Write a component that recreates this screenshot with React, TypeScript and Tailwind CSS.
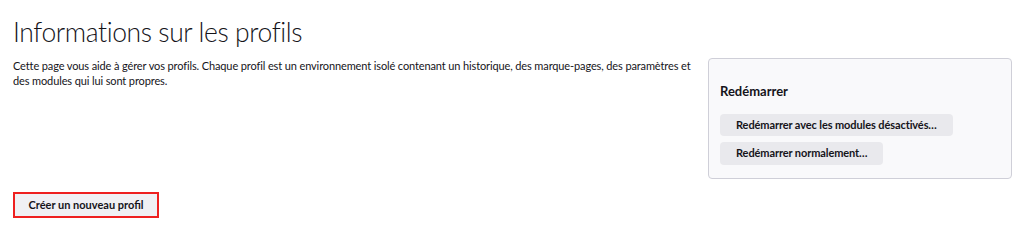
import React from "react";

export default function App() {
  return (
    <div className="w-[1024px] h-[229px] bg-white text-[#15141a] overflow-hidden" style={{ fontFamily: 'Lato, "Noto Sans", sans-serif' }}>
      <div className="pl-[13px] pr-[12px] pt-[14px]">
        <div className="flex gap-[10px]">
          <div className="flex-1">
            <h1 className="text-[26.5px] font-light leading-[36px] tracking-[-0.4px]">Informations sur les profils</h1>
            <p className="mt-[8px] text-[11px] leading-[15px] tracking-[-0.12px]">
              Cette page vous aide à gérer vos profils. Chaque profil est un environnement isolé contenant un historique, des marque-pages, des paramètres et des modules qui lui sont propres.
            </p>
          </div>
          <div className="mt-[44px] w-[304px] h-[121px] border border-[#cfcfd8] rounded-[4px] bg-[#f9f9fb] px-[11px] pt-[24px]">
            <h2 className="text-[13px] font-bold leading-[16px]">Redémarrer</h2>
            <div className="mt-[15px] flex flex-col items-start gap-[6px]">
              <button className="h-[22px] px-[16px] rounded-[4px] bg-[#e9e9ed] text-[11px] font-bold tracking-[-0.1px]">Redémarrer avec les modules désactivés…</button>
              <button className="h-[23px] px-[16px] rounded-[4px] bg-[#e9e9ed] text-[11px] font-bold tracking-[-0.1px]">Redémarrer normalement…</button>
            </div>
          </div>
        </div>
        <button className="mt-[13px] h-[26px] w-[146px] border-2 border-[#ee2020] bg-[#f0f0f4] text-[11px] font-bold">Créer un nouveau profil</button>
      </div>
    </div>
  );
}
